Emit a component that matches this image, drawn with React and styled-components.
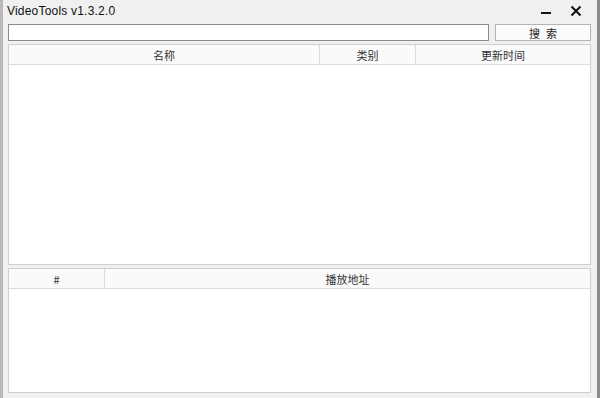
import React from 'react'
import styled, { createGlobalStyle } from 'styled-components'

const Global = createGlobalStyle`
  html, body { margin: 0; padding: 0; }
  body {
    width: 600px;
    height: 398px;
    overflow: hidden;
    font-family: "Noto Sans CJK SC", "Liberation Sans", sans-serif;
    font-size: 12px;
    color: #222;
  }
`

const Window = styled.div`
  width: 600px;
  height: 398px;
  box-sizing: border-box;
  background: #f0f0f0;
  border-left: 3px solid #b9b9b9;
  border-right: 3px solid #8a8a8a;
  display: flex;
  flex-direction: column;
`

const TitleBar = styled.div`
  height: 22px;
  display: flex;
  align-items: center;
  padding: 0 6px 0 4px;
`

const Title = styled.div`
  flex: 1;
  font-family: "Liberation Sans", "Noto Sans CJK SC", sans-serif;
  font-size: 12px;
  color: #111;
  letter-spacing: 0.2px;
`

const CtrlBtn = styled.div`
  width: 30px;
  height: 20px;
  display: flex;
  align-items: center;
  justify-content: center;
`

const Body = styled.div`
  flex: 1;
  display: flex;
  flex-direction: column;
  padding: 2px 6px 4px 5px;
  gap: 3px;
`

const SearchRow = styled.div`
  display: flex;
  gap: 6px;
  height: 17px;
`

const SearchInput = styled.div`
  flex: 1;
  box-sizing: border-box;
  background: #fff;
  border: 1px solid #8a8a8a;
`

const SearchButton = styled.div`
  width: 96px;
  box-sizing: border-box;
  border: 1px solid #b4b4b4;
  background: #fbfbfb;
  display: flex;
  align-items: center;
  justify-content: center;
  letter-spacing: 6px;
  padding-left: 6px;
  font-size: 11px;
`

const Grid = styled.div`
  box-sizing: border-box;
  height: ${p => p.$h}px;
  background: #fff;
  border: 1px solid #cfcfcf;
  display: flex;
  flex-direction: column;
`

const HeaderRow = styled.div`
  height: 19px;
  display: grid;
  grid-template-columns: ${p => p.$cols};
  border-bottom: 1px solid #dcdcdc;
  background: #fafafa;
`

const HeaderCell = styled.div`
  display: flex;
  align-items: center;
  justify-content: center;
  font-size: 11px;
  color: #333;
  border-right: 1px solid #dadada;
  &:last-child { border-right: none; }
`

export default function App() {
  return (
    <Window>
      <Global />
      <TitleBar>
        <Title>VideoTools v1.3.2.0</Title>
        <CtrlBtn>
          <svg width="12" height="12" viewBox="0 0 12 12">
            <rect x="1" y="7" width="10" height="2" fill="#111" />
          </svg>
        </CtrlBtn>
        <CtrlBtn>
          <svg width="12" height="12" viewBox="0 0 12 12">
            <path d="M1.5 1.5 L10.5 10.5 M10.5 1.5 L1.5 10.5" stroke="#111" strokeWidth="2" />
          </svg>
        </CtrlBtn>
      </TitleBar>
      <Body>
        <SearchRow>
          <SearchInput />
          <SearchButton>搜索</SearchButton>
        </SearchRow>
        <Grid $h={221}>
          <HeaderRow $cols="311px 96px 1fr">
            <HeaderCell>名称</HeaderCell>
            <HeaderCell>类别</HeaderCell>
            <HeaderCell>更新时间</HeaderCell>
          </HeaderRow>
        </Grid>
        <Grid $h={125}>
          <HeaderRow $cols="96px 1fr">
            <HeaderCell>#</HeaderCell>
            <HeaderCell>播放地址</HeaderCell>
          </HeaderRow>
        </Grid>
      </Body>
    </Window>
  )
}
